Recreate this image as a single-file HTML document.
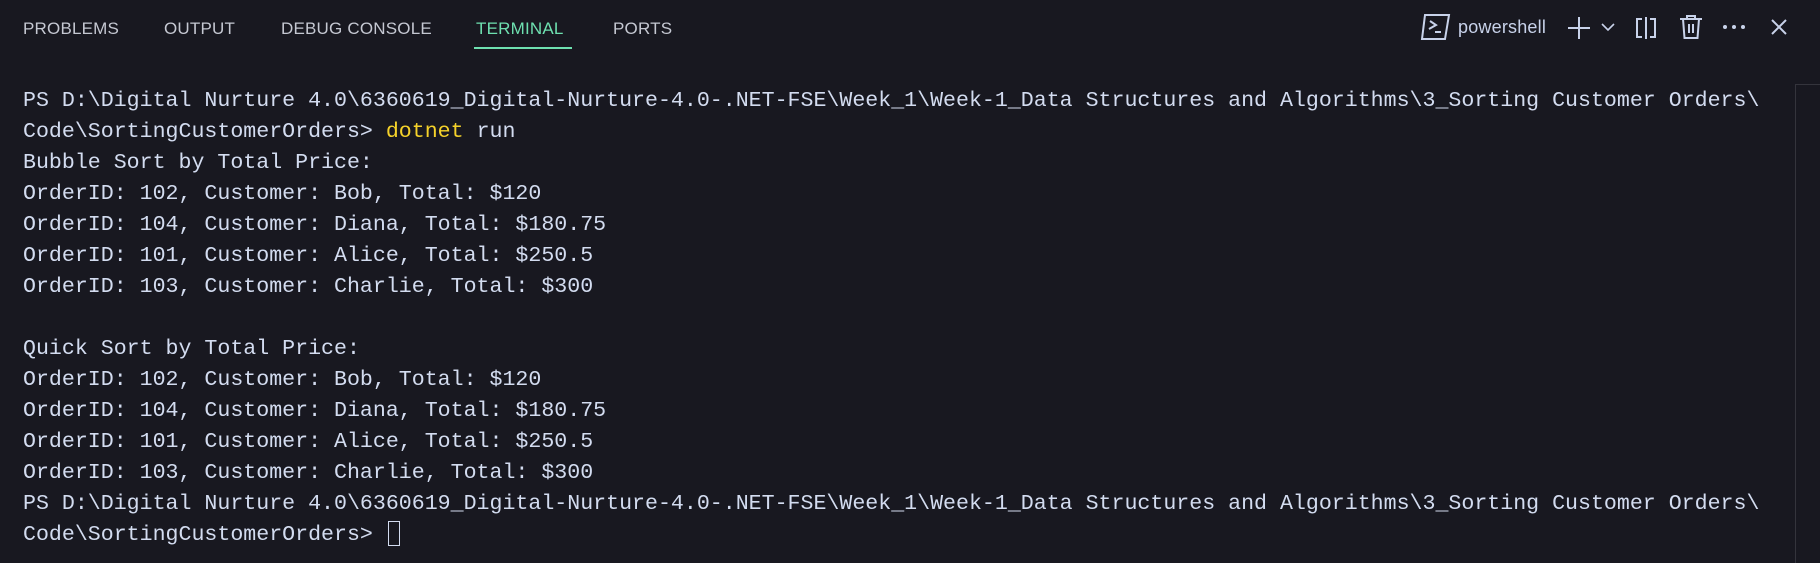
<!DOCTYPE html>
<html><head><meta charset="utf-8"><style>
html,body{margin:0;padding:0;width:1820px;height:563px;background:#181820;overflow:hidden}
.tab{position:absolute;top:19px;font:17px "Liberation Sans",sans-serif;color:#c5c8d2;letter-spacing:0.2px}
.term{position:absolute;left:23px;top:86px;font:21.6px/31px "Liberation Mono",monospace;color:#d3dcf0;white-space:pre}
.y{color:#f5d22a}
svg{position:absolute}
</style></head><body>
<div class="tab" style="left:23px">PROBLEMS</div>
<div class="tab" style="left:164px">OUTPUT</div>
<div class="tab" style="left:281px">DEBUG CONSOLE</div>
<div class="tab" style="left:476px;color:#6ee0b0">TERMINAL</div>
<div style="position:absolute;left:474px;top:47px;width:98px;height:2px;background:#6ee0b0"></div>
<div class="tab" style="left:613px">PORTS</div>

<svg style="left:1420px;top:12px" width="32" height="30" viewBox="0 0 32 30" fill="none" stroke="#c8d2ea" stroke-width="2">
<path d="M5 3H29L25 27H2Z"/><path d="M10 9L16 13L9 17"/><path d="M15 20H21"/></svg>
<div class="tab" style="left:1458px;top:17px;font-size:18px;color:#c8d2ea">powershell</div>
<svg style="left:1566px;top:15px" width="26" height="26" viewBox="0 0 26 26" stroke="#c8d2ea" stroke-width="2" fill="none"><path d="M13 2V24M2 13H24"/></svg>
<svg style="left:1600px;top:22px" width="16" height="10" viewBox="0 0 16 10" stroke="#c8d2ea" stroke-width="1.6" fill="none"><path d="M2 2L8 8L14 2"/></svg>
<svg style="left:1633px;top:15px" width="26" height="26" viewBox="0 0 26 26" stroke="#c8d2ea" stroke-width="2" fill="none"><path d="M9 4H4V22H9M17 4H22V22H17M13 2V24"/></svg>
<svg style="left:1678px;top:13px" width="26" height="28" viewBox="0 0 26 28" stroke="#c8d2ea" stroke-width="2" fill="none"><path d="M2 6H24M9 6V3H17V6M5 6L6.5 25H19.5L21 6M11 11V20M15 11V20"/></svg>
<svg style="left:1722px;top:24px" width="24" height="6" viewBox="0 0 24 6" fill="#c8d2ea"><circle cx="3" cy="3" r="2"/><circle cx="12" cy="3" r="2"/><circle cx="21" cy="3" r="2"/></svg>
<svg style="left:1770px;top:18px" width="18" height="18" viewBox="0 0 18 18" stroke="#c8d2ea" stroke-width="2" fill="none"><path d="M2 2L16 16M16 2L2 16"/></svg>
<div style="position:absolute;left:1795px;top:84px;width:1px;height:479px;background:#34343c"></div>
<div style="position:absolute;left:1796px;top:84px;width:24px;height:1px;background:#34343c"></div>

<div class="term">PS D:\Digital Nurture 4.0\6360619_Digital-Nurture-4.0-.NET-FSE\Week_1\Week-1_Data Structures and Algorithms\3_Sorting Customer Orders\
Code\SortingCustomerOrders&gt; <span class="y">dotnet</span> run
Bubble Sort by Total Price:
OrderID: 102, Customer: Bob, Total: $120
OrderID: 104, Customer: Diana, Total: $180.75
OrderID: 101, Customer: Alice, Total: $250.5
OrderID: 103, Customer: Charlie, Total: $300

Quick Sort by Total Price:
OrderID: 102, Customer: Bob, Total: $120
OrderID: 104, Customer: Diana, Total: $180.75
OrderID: 101, Customer: Alice, Total: $250.5
OrderID: 103, Customer: Charlie, Total: $300
PS D:\Digital Nurture 4.0\6360619_Digital-Nurture-4.0-.NET-FSE\Week_1\Week-1_Data Structures and Algorithms\3_Sorting Customer Orders\
Code\SortingCustomerOrders&gt;</div>
<div style="position:absolute;left:388px;top:521px;width:10px;height:23px;border:1.5px solid #d3dcf0"></div>
</body></html>
